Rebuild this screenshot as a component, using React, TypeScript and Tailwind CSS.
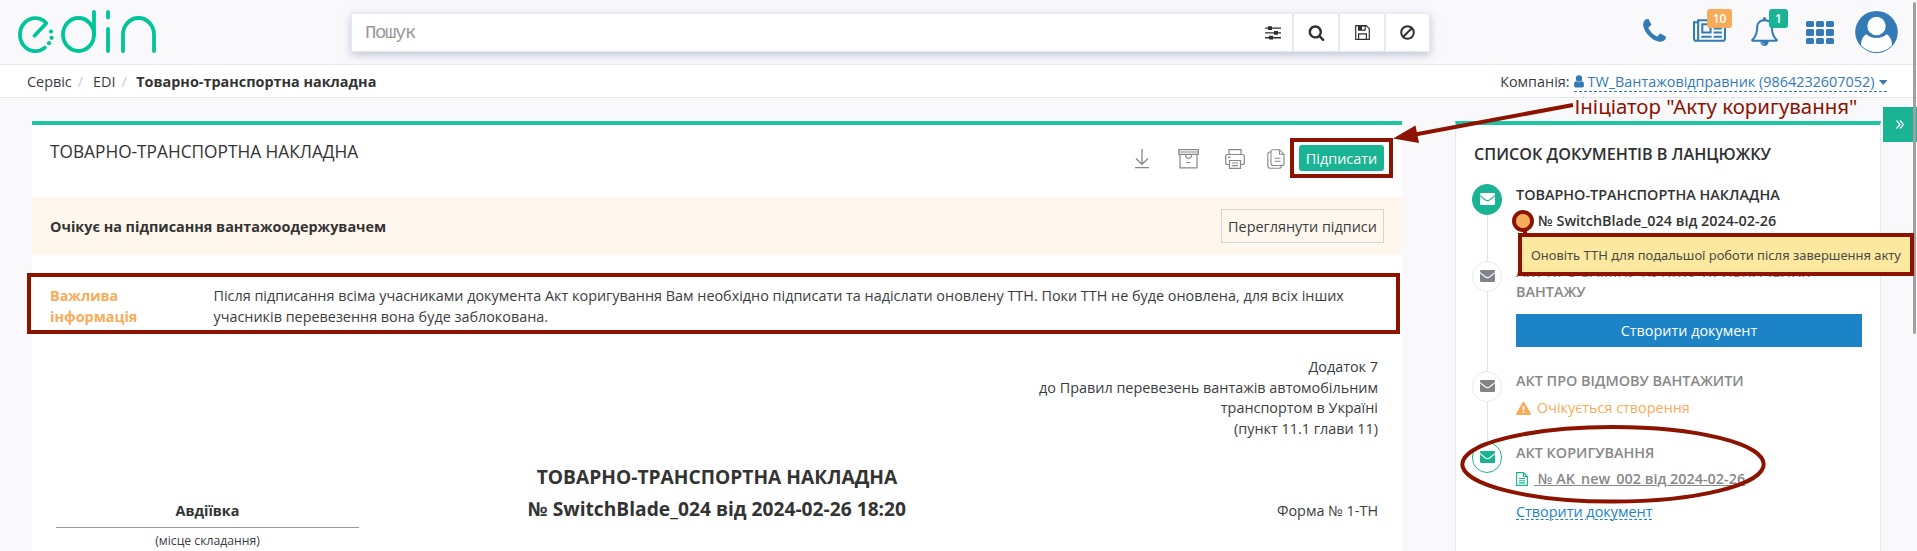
import React from "react";

const P = {
  phone:
    "M1600 1240q0 27-10 70.5t-21 68.5q-21 50-122 106-94 51-186 51-27 0-53-3.5t-57.5-12.5-47-14.5-55.5-20.5-49-18q-98-35-175-83-127-79-264-216t-216-264q-48-77-83-175-3-9-18-49t-20.5-55.5-14.5-47-12.5-57.5-3.5-53q0-92 51-186 56-101 106-122 25-11 68.5-21t70.5-10q14 0 21 3 18 6 53 76 11 19 30 54t35 63.5 31 53.5q3 4 17.5 25t21.5 35.5 7 28.5q0 20-28.5 50t-62 55-62 53-28.5 46q0 9 5 22.5t8.5 20.5 14 24 11.5 19q76 137 174 235t235 174q2 1 19 11.5t24 14 20.5 8.5 22.5 5q18 0 46-28.5t53-62 55-62 50-28.5q14 0 28.5 7t35.5 21.5 25 17.5q25 15 53.5 31t63.5 35 54 30q70 35 76 53 3 7 3 21z",
  news:
    "M1024 512h-384v384h384v-384zm128 640v128h-640v-128h640zm0-768v640h-640v-640h640zm640 768v128h-512v-128h512zm0-256v128h-512v-128h512zm0-256v128h-512v-128h512zm0-256v128h-512v-128h512zm-1536 960v-960h-128v960q0 26 19 45t45 19 45-19 19-45zm1664 0v-1088h-1536v1088q0 33-11 64h1483q26 0 45-19t19-45zm128-1216v1216q0 80-56 136t-136 56h-1664q-80 0-136-56t-56-136v-1088h256v-128h1792z",
  bell:
    "M912 1696q0-16-16-16-59 0-101.5-42.5t-42.5-101.5q0-16-16-16t-16 16q0 73 51.5 124.5t124.5 51.5q16 0 16-16zm-666-288h1300q-266-300-266-832 0-51-24-105t-69-103-121.5-80.5-169.5-31.5-169.5 31.5-121.5 80.5-69 103-24 105q0 532-266 832zm1482 0q0 52-38 90t-90 38h-448q0 106-75 181t-181 75-181-75-75-181h-448q-52 0-90-38t-38-90q50-42 91-88t85-119.5 74.5-158.5 50-206 19.5-260q0-152 117-282.5t307-158.5q-8-19-8-39 0-40 28-68t68-28 68 28 28 68q0 20-8 39 190 28 307 158.5t117 282.5q0 139 19.5 260t50 206 74.5 158.5 85 119.5 91 88z",
  search:
    "M1216 832q0-185-131.5-316.5t-316.5-131.5-316.5 131.5-131.5 316.5 131.5 316.5 316.5 131.5 316.5-131.5 131.5-316.5zm512 832q0 52-38 90t-90 38q-54 0-90-38l-343-342q-179 124-399 124-143 0-273.5-55.5t-225-150-150-225-55.5-273.5 55.5-273.5 150-225 225-150 273.5-55.5 273.5 55.5 225 150 150 225 55.5 273.5q0 220-124 399l343 343q37 37 37 90z",
};

function Logo() {
  return (
    <svg width="142" height="46" viewBox="16 9 142 46" fill="none" stroke="#00c49a" strokeWidth="3.8" strokeLinecap="round" strokeLinejoin="round">
      <path d="M34.500 35.700 46.300 23.300A15.300 16.500 0 1 0 44.800 47.600" />
      <ellipse cx="78.500" cy="34.500" rx="15.500" ry="16.500" />
      <path d="M94 12V34.500M108 12V17.500M108 29V51M123 51V34.500A15.500 16.500 0 0 1 154 34.500V51" />
      <g fill="#00c49a" stroke="none">
        <circle cx="51" cy="31.500" r="2.100" />
        <circle cx="51.600" cy="37.800" r="2.100" />
        <circle cx="49" cy="43.200" r="2.100" />
      </g>
    </svg>
  );
}

function Envelope({ color, cut }: { color: string; cut: string }) {
  return (
    <svg className="-mt-px" width="15" height="12" viewBox="0 0 15 12">
      <rect width="15" height="12" rx="1.2" fill={color} />
      <path d="M0 2.6 5.5 6.9Q7.5 8.2 9.5 6.9L15 2.6" fill="none" stroke={cut} strokeWidth="1.2" />
    </svg>
  );
}

type Kind = "active" | "idle" | "outlined";

function Step({ kind, className, last, children }: { kind: Kind; className: string; last?: boolean; children: React.ReactNode }) {
  const ring =
    kind === "active" ? "bg-[#1ab394] border-[#1ab394]" : kind === "outlined" ? "bg-white border-[#1ab394]" : "bg-white border-[#e7eaec]";
  const color = kind === "active" ? "#ffffff" : kind === "outlined" ? "#1ab394" : "#808488";
  return (
    <div className={`flex ${className}`}>
      <div className="flex w-[30px] flex-col items-center">
        <div className={`flex h-[31px] w-[30px] shrink-0 items-center justify-center rounded-full border ${ring}`}>
          <Envelope color={color} cut={kind === "active" ? "#1ab394" : "#ffffff"} />
        </div>
        {!last && <div className="w-px flex-1 bg-[#e0e2e5]" />}
      </div>
      <div className="ml-[14px] w-[346px] font-semibold leading-5 text-[#888888]">{children}</div>
    </div>
  );
}

export default function App() {
  return (
    <div className="relative h-[551px] w-[1917px] overflow-hidden bg-[#f9f9fc] font-['Open_Sans','Noto_Sans',sans-serif] text-[14.4px] leading-[20.57px] text-[#3b3c3e]">
      <header className="flex h-[65px] border-b border-[#e4e7ea]">
        <div className="w-[351px] pl-4 pt-[9px]">
          <Logo />
        </div>
        <div className="mt-[13px] flex h-[39px] w-[1079px] items-stretch border border-[#e7eaec] bg-white shadow-[0_3px_8px_rgba(140,145,175,0.5)]">
          <div className="flex flex-1 items-center pl-[13px] pt-[2px] font-['Liberation_Mono',monospace] text-[19px] tracking-[-1.4px] text-[#999]">Пошук</div>
          <div className="flex w-[27px] items-center text-[#2f3134]">
            <svg width="16" height="14" viewBox="0 0 16 14" fill="currentColor">
              <path d="M0 1.4h16v1.4H0zM0 6.2h16v1.4H0zM0 11h16v1.4H0z" />
              <path d="M3 .2h4v3.8H3zM9 5h4v3.8H9zM4 9.8h4v3.8H4z" />
            </svg>
          </div>
          <div className="flex w-[46px] items-center justify-center border-l-2 border-[#e7eaec] text-[#2f3134]">
            <svg width="17" height="17" viewBox="0 0 1792 1792" fill="currentColor">
              <path d={P.search} />
            </svg>
          </div>
          <div className="flex w-[46px] items-center justify-center border-l-2 border-[#e7eaec] text-[#2f3134]">
            <svg width="15" height="15" viewBox="0 0 15 15" fill="none" stroke="currentColor" strokeWidth="1.2">
              <path d="M.7.7h10.6l3 3v10.6H.7zM3.6 14V8.8h7.8V14" />
              <path d="M3.6.8h6.6v4.4H3.6z" />
              <path d="M4 1h3v4H4z" fill="currentColor" stroke="none" />
            </svg>
          </div>
          <div className="flex w-[45px] items-center justify-center border-l-2 border-[#e7eaec] text-[#2f3134]">
            <svg width="15" height="15" viewBox="0 0 15 15" fill="none" stroke="currentColor" strokeWidth="2">
              <circle cx="7.5" cy="7.5" r="6.3" />
              <path d="M3.2 11.8 11.8 3.2" />
            </svg>
          </div>
        </div>
        <div className="ml-auto flex pr-[19px] pt-[17px] text-[#337ab7]">
          <svg width="29" height="29" viewBox="0 0 1792 1792" fill="currentColor">
            <path d={P.phone} />
          </svg>
          <div className="relative ml-6">
            <svg width="33" height="29" viewBox="0 0 2048 1792" fill="currentColor">
              <path d={P.news} />
            </svg>
            <span className="absolute -top-2 left-[14px] flex h-[19px] w-[25px] items-center justify-center rounded-[3px] bg-[#f8ac59] pt-px text-[12px] font-semibold text-white">10</span>
          </div>
          <div className="relative ml-6">
            <svg width="29" height="29" viewBox="0 0 1792 1792" fill="currentColor">
              <path d={P.bell} />
            </svg>
            <span className="absolute -top-2 left-[19px] flex h-[19px] w-[19px] items-center justify-center rounded-[3px] bg-[#1ab394] pt-px text-[12px] font-semibold text-white">1</span>
          </div>
          <div className="ml-[27px] mt-1 grid h-[23px] w-[28px] grid-cols-3 gap-x-[2px] gap-y-[2px]">
            {Array.from({ length: 9 }, (_, i) => (
              <span key={i} className="rounded-[1.5px] bg-[#337ab7]" />
            ))}
          </div>
          <svg className="-mt-[6px] ml-[21px]" width="43" height="42" viewBox="0 0 43 42">
            <ellipse cx="21.5" cy="21" rx="21.3" ry="21" fill="#337ab7" />
            <path d="M11.500 23.200C8 25 6 29 6 34.200 10 38.300 15 41 21.500 41S33 38.300 37 34.200C37 29 35 25 31.500 23.200 29 25.800 25.500 27 21.500 27S14 25.800 11.500 23.200Z" fill="#fff" />
            <circle cx="21.500" cy="15" r="9.200" fill="#fff" />
          </svg>
        </div>
      </header>

      <nav className="flex h-[33px] items-center border-b border-[#e4e7ea] bg-white pl-[27px] pr-[30px] pt-[2px]">
        <span>Сервіс</span>
        <span className="ml-[6px] text-[#ccc]">/</span>
        <span className="ml-[10px]">EDI</span>
        <span className="ml-[6px] text-[#ccc]">/</span>
        <strong className="ml-[9.500px] font-bold text-[#333]">Товарно-транспортна накладна</strong>
        <span className="ml-auto">Компанія:</span>
        <a className="ml-1 mt-px flex h-[19px] items-center border-b border-dashed border-[#337ab7] text-[#337ab7]">
          <svg className="mb-px" width="10" height="13" viewBox="0 0 10 13" fill="currentColor">
            <circle cx="5" cy="3.500" r="3.200" />
            <path d="M2.300 6Q0 6.300 0 10.500 0 12.600 1.800 12.600H8.200Q10 12.600 10 10.500 10 6.300 7.700 6 5 8.400 2.300 6Z" />
          </svg>
          <span className="ml-1">TW_Вантажовідправник (9864232607052)</span>
          <svg className="ml-1" width="8.500" height="5" viewBox="0 0 8 5" preserveAspectRatio="none" fill="currentColor">
            <path d="M0 0H8L4 5Z" />
          </svg>
        </a>
      </nav>

      <main className="flex items-start pl-8 pt-[23px]">
        <section className="h-[440px] w-[1370px] border-t-4 border-[#1fc4a3] bg-white">
          <div className="flex h-[72px] pl-[18px] pr-[18px]">
            <h1 className="pt-[15px] text-[17.28px] leading-6 text-[#333]">ТОВАРНО-ТРАНСПОРТНА НАКЛАДНА</h1>
            <div className="ml-auto flex items-start pt-[20px] text-[#888]">
              <svg className="mt-[4px]" width="14" height="20" viewBox="0 0 14 20" fill="none" stroke="currentColor" strokeWidth="1.3">
                <path d="M7 0V15M1 9.500 7 15.300 13 9.500M0 18.700H14" />
              </svg>
              <svg className="ml-[29px] mt-[4px]" width="21" height="20" viewBox="0 0 21 20" fill="none" stroke="currentColor" strokeWidth="1.200">
                <path d="M.7.700H20.300V5.300H.7zM2 5.300V18.900H19V5.300M7.500 5.500Q7.500 9.300 10.500 9.300T13.500 5.500M8.500 13.500H12.500M.7 3H20.300" />
              </svg>
              <svg className="ml-[26px] mt-[4px]" width="20" height="20" viewBox="0 0 20 20" fill="none" stroke="currentColor" strokeWidth="1.200">
                <path d="M4 5.500V.700H16V5.500M4.500 15.500H2.500Q.7 15.500.7 13.500V7.500Q.7 5.500 2.500 5.500H17.500Q19.300 5.500 19.300 7.500V13.500Q19.300 15.500 17.500 15.500H15.500M4.500 11.500H15.500V19.300H4.500zM7 14H13M7 16.600H13M3 8.300H5.500" />
              </svg>
              <svg className="ml-[22px] mt-[4px]" width="18" height="20" viewBox="0 0 18 20" fill="none" stroke="currentColor" strokeWidth="1.100">
                <path d="M6 .700H12.500L17 5.200V14.500Q17 16.500 15 16.500H6Q4 16.500 4 14.500V2.700Q4 .700 6 .700ZM12.500.700V5.200H17M4 2.700Q.8 2.700.8 5V16.500Q.8 19.300 3.500 19.300H12Q14 19.300 14.500 16.800M7.500 9.300H13.500M7.500 12.300H13.500" />
              </svg>
              <button className="ml-[14px] flex h-[26px] w-[85px] items-center justify-center rounded-[3px] bg-[#1ab394] pt-[3px] text-[14.4px] text-white">Підписати</button>
            </div>
          </div>
          <div className="flex h-[58px] items-center justify-between bg-[#fff7ed] px-[18px]">
            <strong className="pt-[3px] font-bold text-[#333]">Очікує на підписання вантажоодержувачем</strong>
            <button className="h-[34px] w-[163px] whitespace-nowrap border border-[#d6d7d4] pt-[3px]">Переглянути підписи</button>
          </div>
          <div className="mt-[31px] flex h-[41px] pl-[18px]">
            <div className="w-[163.500px] font-bold text-[#f8ac59]">
              Важлива
              <br />
              інформація
            </div>
            <p className="w-[1160px]">
              Після підписання всіма учасниками документа Акт коригування Вам необхідно підписати та надіслати оновлену ТТН. Поки ТТН не буде оновлена, для всіх інших
              <br />
              учасників перевезення вона буде заблокована.
            </p>
          </div>
          <div className="mt-[30px] pr-6 text-right">
            Додаток 7<br />
            до Правил перевезень вантажів автомобільним
            <br />
            транспортом в Україні
            <br />
            (пункт 11.1 глави 11)
          </div>
          <div className="mt-[22px] flex items-end pl-6 pr-6 text-center">
            <div className="w-[303px]">
              <div className="border-b border-[#999] pb-[6px] pt-px font-bold text-[#333]">Авдіївка</div>
              <div className="h-[21px] pt-[4px] text-[12.200px] leading-[18px]">(місце складання)</div>
            </div>
            <h2 className="mb-[21px] flex-1 pb-[3px] text-[19.200px] font-bold leading-8 text-[#333]">
              ТОВАРНО-ТРАНСПОРТНА НАКЛАДНА
              <br />№ SwitchBlade_024 від 2024-02-26 18:20
            </h2>
            <div className="w-[303px] pb-[28px] text-right">Форма № 1-ТН</div>
          </div>
        </section>

        <aside className="ml-[53px] h-[440px] w-[426px] border-x border-t-4 border-x-[#e7eaec] border-t-[#1fc4a3] bg-white pl-4 pt-[17px]">
          <h3 className="pl-[2px] text-[16.200px] font-semibold leading-6 text-[#2f3032]">СПИСОК ДОКУМЕНТІВ В ЛАНЦЮЖКУ</h3>
          <div className="pt-[18px]">
            <Step kind="active" className="h-[77px]">
              <div className="pt-px text-[#333]">ТОВАРНО-ТРАНСПОРТНА НАКЛАДНА</div>
              <div className="mt-[6px] flex items-center text-[#333]">
                <span className="h-[14px] w-[14px] rounded-full bg-[#f8ac59]" />
                <span className="ml-2">№ SwitchBlade_024 від 2024-02-26</span>
              </div>
            </Step>
            <Step kind="idle" className="h-[110px]">
              <div className="pt-px">
                АКТ ПРО ЗАМІНУ ПУНКТУ ПРИЗНАЧЕННЯ
                <br />
                ВАНТАЖУ
              </div>
              <button className="mt-[12px] h-[33px] w-full bg-[#1c84c6] font-normal text-white">Створити документ</button>
            </Step>
            <Step kind="idle" className="h-[71px]">
              <div>АКТ ПРО ВІДМОВУ ВАНТАЖИТИ</div>
              <div className="mt-[7px] flex items-center font-normal text-[#f8ac59]">
                <svg width="15" height="13" viewBox="0 0 15 13">
                  <path d="M7.500 0Q8.200 0 8.500.600L14.800 11.600Q15.200 13 14 13H1Q-.2 13 .2 11.600L6.500.600Q6.800 0 7.500 0Z" fill="currentColor" />
                  <path d="M6.500 4H8.500L8.200 8.400H6.800zM6.600 9.400H8.400V11.100H6.600z" fill="#fff" />
                </svg>
                <span className="ml-[6px]">Очікується створення</span>
              </div>
            </Step>
            <Step kind="outlined" className="h-[90px]" last>
              <div className="pt-px">АКТ КОРИГУВАННЯ</div>
              <div className="mt-[6px] flex items-center">
                <svg width="12" height="14" viewBox="0 0 12 14" fill="none" stroke="#1ab394" strokeWidth="1.100">
                  <path d="M.6.600H7.500L11.400 4.500V13.400H.6zM7.500.600V4.500H11.400M3 6.500H9M3 8.700H9M3 10.900H9" />
                </svg>
                <span className="ml-[6px] whitespace-pre underline decoration-1 underline-offset-[1px]"> № AK_new_002 від 2024-02-26</span>
              </div>
              <a className="mt-[13px] inline-block font-normal text-[#1c84c6] underline decoration-dashed decoration-1 underline-offset-[2px]">Створити документ</a>
            </Step>
          </div>
        </aside>
      </main>

      <div className="absolute left-[1883px] top-[107px] flex h-[35px] w-[34px] items-center justify-center bg-[#1ab394]">
        <svg width="8" height="9" viewBox="0 0 8 9" fill="none" stroke="#fff" strokeWidth="1.200">
          <path d="M.5.500 4 4.500.5 8.500M4 .500 7.500 4.500 4 8.500" />
        </svg>
      </div>
      <div className="absolute left-[1913px] top-[2px] h-[332px] w-[3px] rounded-full bg-[#a0a0a0]" />

      <svg className="pointer-events-none absolute left-0 top-0" width="1917" height="551" fill="none" stroke="#8b1300" strokeWidth="4">
        <rect x="29" y="275" width="1369" height="57" />
        <rect x="1292" y="140" width="99" height="36" />
        <path d="M1573 105 1415 134.500" />
        <path d="M1393 138.500 1415.500 125.500 1419 143Z" fill="#8b1300" stroke="none" />
        <circle cx="1523" cy="221" r="9" />
        <path d="M1525 230V235" />
        <ellipse cx="1613" cy="464.300" rx="150.700" ry="37.300" />
      </svg>
      <div className="absolute left-[1574.500px] top-[92px] whitespace-nowrap font-['Noto_Sans',sans-serif] text-[20.450px] leading-[28px] text-[#8b1300]">Ініціатор "Акту коригування"</div>
      <div className="absolute left-[1518px] top-[233px] flex h-[43px] w-[396px] items-center whitespace-nowrap border-4 border-[#8b1300] bg-[#fce99f] pl-[9px] pt-[2px] font-['Noto_Sans',sans-serif] text-[12.940px] text-[#4a4a45]">
        Оновіть ТТН для подальшої роботи після завершення акту
      </div>
    </div>
  );
}
